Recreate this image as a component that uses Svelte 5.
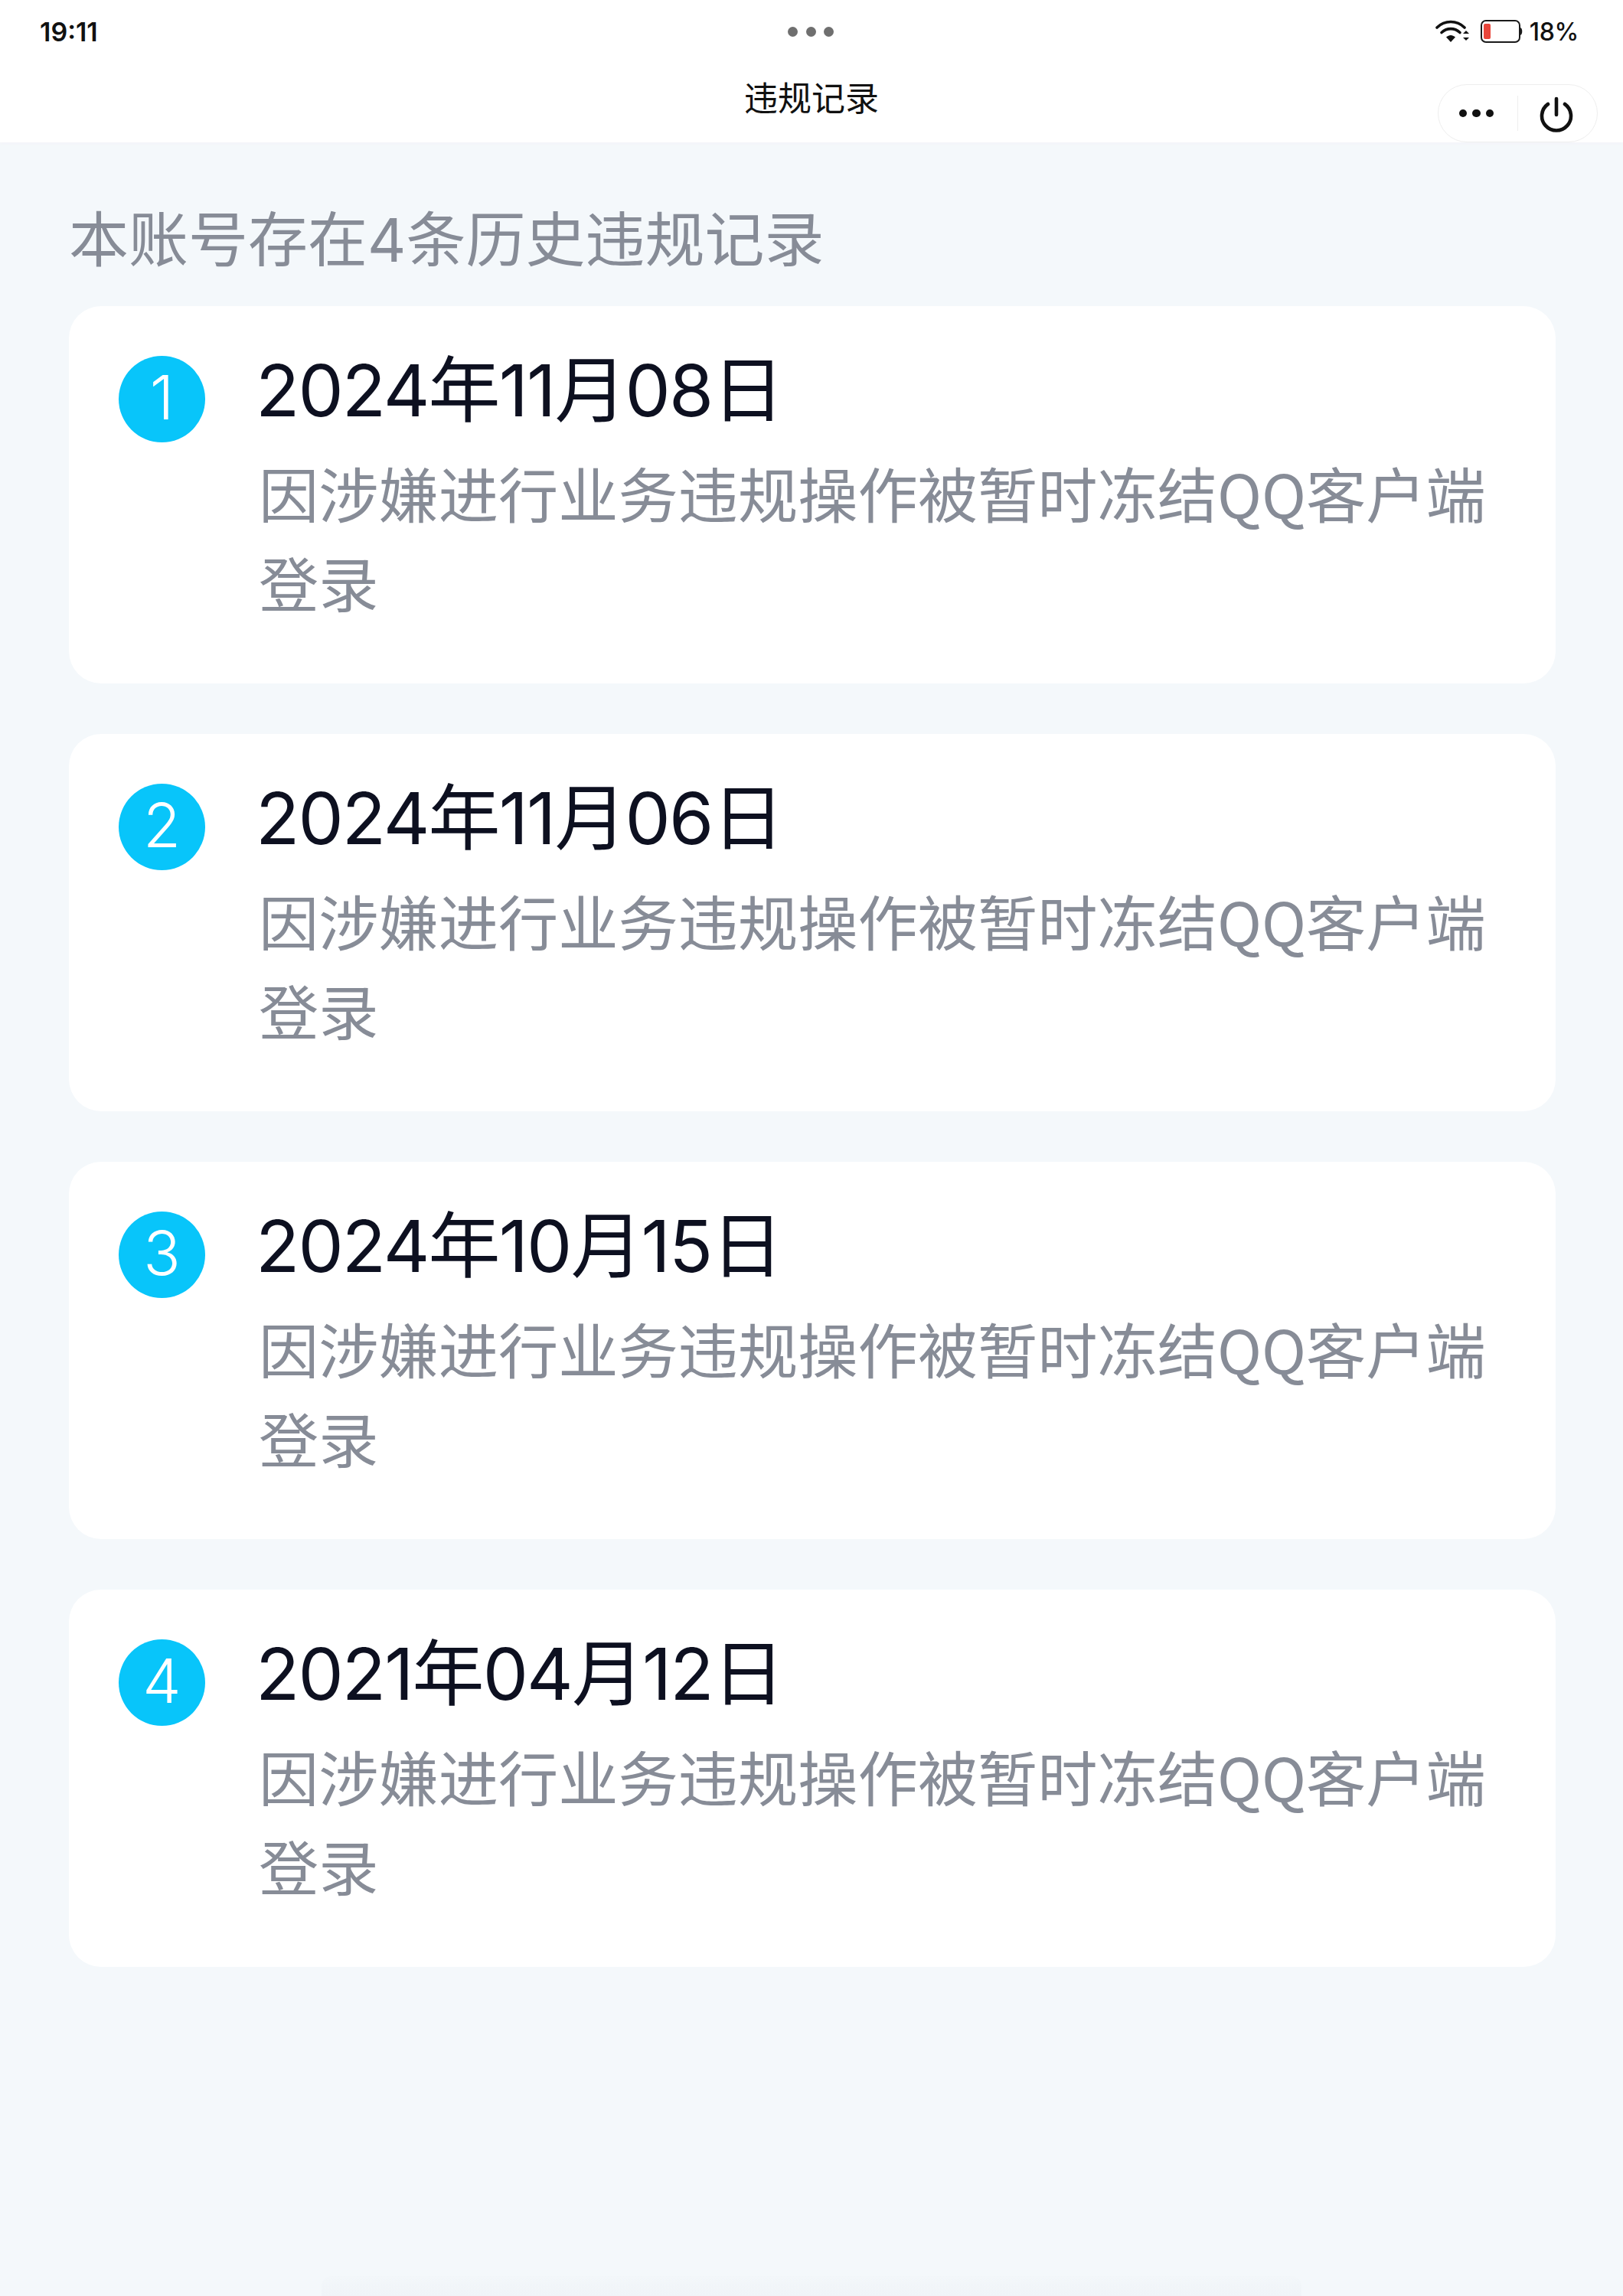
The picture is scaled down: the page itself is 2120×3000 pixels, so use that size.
<script>
	const records = [
		{ n: 1, date: '2024年11月08日' },
		{ n: 2, date: '2024年11月06日' },
		{ n: 3, date: '2024年10月15日' },
		{ n: 4, date: '2021年04月12日' }
	];
	const reason = '因涉嫌进行业务违规操作被暂时冻结QQ客户端登录';
</script>

<div class="screen">
	<header class="top">
		<div class="status">
			<span class="time">19:11</span>
			<span class="grip"><i></i><i></i><i></i></span>
			<div class="sys">
				<svg class="wifi" width="46" height="32" viewBox="0 0 46 32">
					<path d="M2 11 C12 1 28 1 38 11" fill="none" stroke="#111" stroke-width="3.6" stroke-linecap="round" />
					<path d="M8 17.5 C15 11 25 11 32 17.5" fill="none" stroke="#111" stroke-width="3.6" stroke-linecap="round" />
					<path d="M14 23.5 C18 20 22 20 26 23.5 L20 30 Z" fill="#111" />
					<path d="M36 19 L40 15 L44 19 Z M36 24 L44 24 L40 28 Z" fill="#111" />
				</svg>
				<svg class="battery" width="56" height="30" viewBox="0 0 56 30">
					<rect x="1" y="1" width="50" height="28" rx="6" fill="#fff" stroke="#1a1a1a" stroke-width="2" />
					<rect x="4" y="5" width="9" height="20" rx="2" fill="#e8453a" />
					<path d="M52 10 C55 11 55 19 52 20 Z" fill="#1a1a1a" />
				</svg>
				<span class="pct">18%</span>
			</div>
		</div>
		<nav class="nav">
			<h1 class="nav-title">违规记录</h1>
			<div class="capsule">
				<span class="more"><i></i><i></i><i></i></span>
				<span class="sep"></span>
				<svg class="power" width="48" height="48" viewBox="0 0 48 48">
					<path d="M13 10 A19 19 0 1 0 35 10" fill="none" stroke="#111" stroke-width="4.6" stroke-linecap="round" />
					<path d="M24 3 V24" fill="none" stroke="#111" stroke-width="4.6" stroke-linecap="round" />
				</svg>
			</div>
		</nav>
	</header>

	<main class="page">
		<p class="summary">本账号存在4条历史违规记录</p>
		<ul class="list">
			{#each records as r (r.n)}
				<li class="card">
					<span class="num">{r.n}</span>
					<div class="body">
						<div class="date">{r.date}</div>
						<p class="reason">{reason}</p>
					</div>
				</li>
			{/each}
		</ul>
	</main>
	<div class="home-glow"></div>
</div>

<style>
	:global(body) {
		margin: 0;
		background: #f4f8fb;
	}

	.screen {
		position: relative;
		width: 2120px;
		height: 3000px;
		background: #f4f8fb;
		font-family: "Noto Sans CJK SC", "Noto Sans", sans-serif;
		overflow: hidden;
	}

	.top {
		background: #fff;
		height: 186px;
		box-shadow: 0 3px 3px #f4f5f9;
	}

	.status {
		height: 82px;
		display: grid;
		grid-template-columns: 1fr auto 1fr;
		align-items: center;
		padding: 0 58px 0 52px;
		color: #111;
		font-family: Inter, "Liberation Sans", sans-serif;
	}

	.time {
		font-size: 34px;
		font-weight: 600;
	}

	.grip {
		display: flex;
		gap: 10.5px;
		transform: translateX(2px);
	}

	.grip i {
		width: 13px;
		height: 13px;
		border-radius: 50%;
		background: #6f6f6f;
	}

	.sys {
		display: flex;
		justify-content: flex-end;
		align-items: center;
	}

	.wifi {
		margin-right: 13px;
	}

	.battery {
		margin-right: 8px;
	}

	.pct {
		font-size: 32px;
		font-weight: 500;
		letter-spacing: -0.3px;
	}

	.nav {
		height: 104px;
		display: grid;
		grid-template-columns: 1fr auto 1fr;
	}

	.nav-title {
		grid-column: 2;
		margin: 0;
		font-size: 44px;
		font-weight: 400;
		color: #111;
		line-height: 88px;
	}

	.capsule {
		grid-column: 3;
		justify-self: end;
		align-self: end;
		margin-right: 33px;
		box-sizing: border-box;
		width: 209px;
		height: 76px;
		border: 1.5px solid #eeeeee;
		border-radius: 38px;
		background: #fff;
		display: flex;
		align-items: center;
	}

	.more {
		display: flex;
		gap: 7px;
		width: 103px;
		justify-content: center;
		padding-right: 4px;
		box-sizing: border-box;
	}

	.more i {
		width: 10.5px;
		height: 10.5px;
		border-radius: 50%;
		background: #111;
	}

	.sep {
		width: 1px;
		height: 46px;
		background: #eeeeee;
	}

	.power {
		margin: 4px 0 0 26px;
	}

	.page {
		padding: 72px 88px 0 90px;
	}

	.summary {
		margin: 0 0 30px 0;
		font-family: Inter, "Noto Sans CJK SC", sans-serif;
		font-size: 78px;
		line-height: 112px;
		font-weight: 400;
		color: #878c97;
	}

	.list {
		list-style: none;
		margin: 0;
		padding: 0;
		display: flex;
		flex-direction: column;
		gap: 66px;
	}

	.card {
		box-sizing: border-box;
		height: 493px;
		background: #fff;
		border-radius: 42px;
		padding: 45px 72px 0 65px;
		display: flex;
		gap: 72px;
	}

	.num {
		flex: none;
		margin-top: 20px;
		width: 113px;
		height: 113px;
		border-radius: 50%;
		background: #08c5fa;
		color: #fff;
		font-family: Inter, sans-serif;
		font-size: 80px;
		font-weight: 300;
		line-height: 108px;
		text-align: center;
	}

	.body {
		min-width: 0;
	}

	.date {
		margin-left: -6px;
		font-family: Inter, "Noto Sans CJK SC", sans-serif;
		font-size: 94px;
		letter-spacing: -1.9px;
		line-height: 130px;
		font-weight: 400;
		color: #0d1020;
	}

	.reason {
		margin: 10px 0 0 -2px;
		font-size: 78.25px;
		line-height: 117px;
		font-weight: 400;
		color: #878c97;
	}

	.home-glow {
		position: absolute;
		left: 420px;
		right: 420px;
		bottom: 0;
		height: 26px;
		background: linear-gradient(#f3f7fa, #f0f4f8);
		border-radius: 13px 13px 0 0;
	}
</style>
